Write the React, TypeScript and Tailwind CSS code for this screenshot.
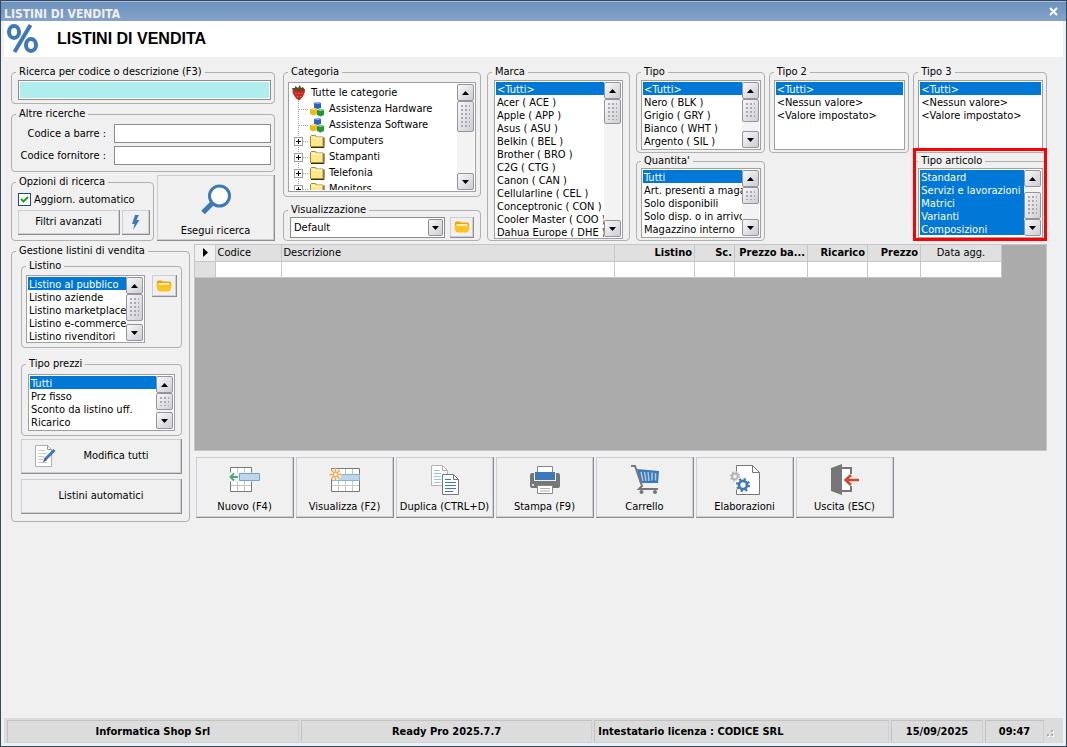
import clsx from "clsx";
import React from "react";

type ListBoxProps = {
  label: string;
  options: string[];
  selected?: string[];
  className: string;
  thumb?: string;
};

const marche = [
  "<Tutti>",
  "Acer ( ACE )",
  "Apple ( APP )",
  "Asus ( ASU )",
  "Belkin ( BEL )",
  "Brother ( BRO )",
  "C2G ( CTG )",
  "Canon ( CAN )",
  "Cellularline ( CEL )",
  "Conceptronic ( CON )",
  "Cooler Master ( COO )",
  "Dahua Europe ( DHE )",
];
const tipi = ["<Tutti>", "Nero ( BLK )", "Grigio ( GRY )", "Bianco ( WHT )", "Argento ( SIL )"];
const valori = ["<Tutti>", "<Nessun valore>", "<Valore impostato>"];
const quantita = [
  "Tutti",
  "Art. presenti a magazzino",
  "Solo disponibili",
  "Solo disp. o in arrivo",
  "Magazzino interno",
];
const articoli = ["Standard", "Servizi e lavorazioni", "Matrici", "Varianti", "Composizioni"];
const listini = [
  "Listino al pubblico",
  "Listino aziende",
  "Listino marketplace",
  "Listino e-commerce",
  "Listino rivenditori",
];
const prezzi = ["Tutti", "Prz fisso", "Sconto da listino uff.", "Ricarico"];

const columns = [
  { name: "Codice", className: "w-[66px] text-left" },
  { name: "Descrizione", className: "text-left" },
  { name: "Listino", className: "w-[80px] text-right font-bold" },
  { name: "Sc.", className: "w-[40px] text-right font-bold" },
  { name: "Prezzo ba...", className: "w-[73px] text-right font-bold" },
  { name: "Ricarico", className: "w-[60px] text-right font-bold" },
  { name: "Prezzo", className: "w-[53px] text-right font-bold" },
  { name: "Data agg.", className: "w-[81px] text-center" },
];

const button =
  "border-r border-b border-[#8e8e92] bg-[#f0f0f0] shadow-[inset_0_0_0_1px_#cdcdd3] active:bg-[#e4e4e4]";

const Group: React.FC<{ title: string; className?: string; body?: string; children: React.ReactNode }> = ({
  title,
  className,
  body,
  children,
}) => (
  <fieldset className={clsx("min-w-0 rounded-[4px] border border-[#b0b0b0]", className)}>
    <legend className="ml-1 px-[3px] leading-[14px] whitespace-nowrap">{title}</legend>
    <div className={body}>{children}</div>
  </fieldset>
);

const Arrow = ({ down }: { down?: boolean }) => (
  <svg width="7" height="4" viewBox="0 0 7 4" className="shrink-0">
    <path d={down ? "M0 0h7L3.5 4z" : "M0 4h7L3.5 0z"} fill="#000" />
  </svg>
);

const scrollPart =
  "flex w-full shrink-0 items-center justify-center rounded-[2px] border border-[#94949a] bg-linear-to-br from-[#f8f8fa] to-[#cdcdd4]";

const ScrollBar = ({ thumb }: { thumb: string }) => (
  <div className="flex w-[17px] shrink-0 flex-col bg-[#f3f3f3]">
    <button type="button" aria-label="Scorri su" className={clsx(scrollPart, "h-[17px]")}>
      <Arrow />
    </button>
    <div className={clsx(scrollPart, thumb)}>
      <div className="h-[calc(100%-6px)] w-[9px] bg-[radial-gradient(circle_at_1px_1px,#a9a9b0_1px,transparent_1px)] bg-size-[4px_4px]" />
    </div>
    <button type="button" aria-label="Scorri giù" className={clsx(scrollPart, "mt-auto h-[17px]")}>
      <Arrow down />
    </button>
  </div>
);

const ListBox: React.FC<ListBoxProps> = ({ label, options, selected, className, thumb }) => (
  <div className={clsx("flex border border-[#a0a0a0] bg-white p-px", className)}>
    <select
      multiple
      aria-label={label}
      size={options.length}
      defaultValue={selected ?? [options[0]]}
      className="block h-full min-w-0 flex-1 appearance-none overflow-hidden border-0 bg-white p-0 outline-none"
    >
      {options.map((option) => (
        <option
          key={option}
          value={option}
          className="h-[13px] min-h-0 overflow-hidden p-0 pt-px pl-px leading-[13px] whitespace-nowrap text-black checked:bg-linear-to-r checked:from-[#0078d7] checked:to-[#0078d7] checked:text-white"
        >
          {option}
        </option>
      ))}
    </select>
    {thumb && <ScrollBar thumb={thumb} />}
  </div>
);

/* Tree icons */
const Strawberry = () => (
  <svg width="16" height="16" viewBox="0 0 16 16" className="shrink-0">
    <path d="M1.500 5C2 3.500 5 3 8 3.500c3-.5 6 0 6 2C14 9 11 13.500 8 15.500 5 14 1 8.500 1.500 5z" fill="#c62a22" />
    <path d="M2 5c2-1 3 1 5 1s4-1 7-1l-2-3-2 1-1-3-2 3-3-2v2L1 3z" fill="#5d4a22" />
    <path d="M5 8v1M8 8v1M11 8v1M6.500 11v1M9.500 11v1" stroke="#f08070" />
  </svg>
);

const Cubes = () => (
  <svg width="16" height="16" viewBox="0 0 16 16" className="shrink-0">
    <path d="M5 2l4-1 3 1v5L8.500 8 5 7z" fill="#2d62c8" />
    <path d="M5 2l4-1 3 1-3.500 1z" fill="#8db4f4" />
    <path d="M1 8l4-1 3 1v5l-3.500 1.500L1 13z" fill="#f2b51a" />
    <path d="M1 8l4-1 3 1-3.500 1z" fill="#ffe480" />
    <path d="M8 9l4-1 3 1v5l-3.500 1.500L8 14z" fill="#1d9a3a" />
    <path d="M8 9l4-1 3 1-3.500 1z" fill="#8ee07a" />
  </svg>
);

const TreeFolder = () => (
  <svg width="16" height="16" viewBox="0 0 16 16" className="shrink-0">
    <path d="M1.500 13.500v-10l1-1h4l1 1.500h6.500v9.500z" fill="#ffe88c" stroke="#a88a20" />
    <path d="M2.500 5h11" stroke="#fffbe0" />
    <path d="M15 4.500V14.500H2" fill="none" stroke="#3c3210" />
  </svg>
);

const Folder = () => (
  <svg width="16" height="12" viewBox="0 0 16 12">
    <path d="M1 2.500C1 1 1.600.5 2.500.5h3L7 1.500h6.500c1 0 1.500.5 1.500 1.500v4H1z" fill="#f5a300" />
    <path d="M2.500 3h11v2h-11z" fill="#fff4c8" />
    <path d="M.5 4c3.500 1.200 11.500 1.200 15 0L15 8.500c-.3 2-1.200 3-3 3H4c-1.800 0-2.700-1-3-3z" fill="#fec31e" />
  </svg>
);

const tree = [
  { name: "Assistenza Hardware", folder: false },
  { name: "Assistenza Software", folder: false },
  { name: "Computers", folder: true },
  { name: "Stampanti", folder: true },
  { name: "Telefonia", folder: true },
  { name: "Monitors", folder: true },
];

const CategoryTree = () => (
  <div className="flex h-[110px] border border-[#a0a0a0] bg-white p-px">
    <ul className="min-w-0 flex-1 overflow-hidden pt-px pl-px" role="tree" aria-label="Categoria">
      <li className="flex h-4 items-center gap-1 whitespace-nowrap" role="treeitem">
        <Strawberry />
        Tutte le categorie
      </li>
      {tree.map(({ name, folder }) => (
        <li key={name} className="flex h-4 items-center whitespace-nowrap" role="treeitem">
          <svg width="18" height="16" viewBox="0 0 18 16" className="shrink-0">
            <path d="M7.500 0v16M8 8.500h10" stroke="#a8a8a8" strokeDasharray="1 1" />
            {folder && (
              <>
                <rect x="3.500" y="4.500" width="8" height="8" fill="#fff" stroke="#a0a0a0" />
                <path d="M5 8.500h5M7.500 6v5" stroke="#000" />
              </>
            )}
          </svg>
          {folder ? <TreeFolder /> : <Cubes />}
          <span className="pl-1">{name}</span>
        </li>
      ))}
    </ul>
    <ScrollBar thumb="h-[31px]" />
  </div>
);

/* Toolbar icons */
const NewIcon = () => (
  <svg width="32" height="32" viewBox="0 0 32 32">
    <path d="M1.500 4.500h21v24h-21zM8.500 4v24M15.500 4v24M1 10.500h21M1 22.500h21" fill="#fff" stroke="#c4c4c4" />
    <path d="M1.500 10V4.500h21V10M1.500 18v10.500h21V18" fill="none" stroke="#777" />
    <path d="M0 9.500h32v9H0z" fill="#f0f0f0" />
    <path d="M10.500 10.500h20v7h-20z" fill="#bfd5ea" stroke="#6fa6cc" />
    <path d="M9 14H2M5 10.500L1.500 14 5 17.500" fill="none" stroke="#4fa882" strokeWidth="2" />
  </svg>
);

const ViewIcon = () => (
  <svg width="32" height="32" viewBox="0 0 32 32">
    <path d="M2.500 5.500h28v23h-28z" fill="#fff" stroke="#777" />
    <path d="M9.500 6v22M16.500 6v22M23.500 6v22M3 22.500h27" stroke="#c8c8c8" />
    <path d="M3 11.500h27.500v6H3z" fill="#bfd5ea" stroke="#7bb7d6" />
    <circle cx="6.500" cy="11.500" r="6" fill="#f0f0f0" />
    <path
      d="M6.500 5.500v12M.5 11.500h12M2.300 7.300l8.400 8.400M10.700 7.300l-8.400 8.400"
      stroke="#efae4e"
      strokeWidth="1.500"
    />
    <circle cx="6.500" cy="11.500" r="2" fill="#fff" stroke="#efae4e" />
  </svg>
);

const CopyIcon = () => (
  <svg width="32" height="32" viewBox="0 0 32 32">
    <path d="M2.500 2.500h11l5 5v15h-16z" fill="#fff" stroke="#b4b4b4" />
    <path d="M13.500 2.500v5h5" fill="none" stroke="#b4b4b4" />
    <path d="M5 7.500h6M5 10.500h7M5 13.500h7M5 16.500h7M5 19.500h7" stroke="#9bc3e2" />
    <path d="M13.500 11.500h11l5 5v15h-16z" fill="#fff" stroke="#777" />
    <path d="M24.500 11.500v5h5" fill="none" stroke="#777" />
    <path d="M16 16.500h6M16 19.500h11M16 22.500h11M16 25.500h11M16 28.500h8" stroke="#3d79b8" />
  </svg>
);

const PrintIcon = () => (
  <svg width="32" height="32" viewBox="0 0 32 32">
    <path d="M3 10h26q2 0 2 2v11q0 2-2 2H3q-2 0-2-2V12q0-2 2-2z" fill="#777" />
    <path d="M5 8h22v10H5z" fill="#f0f0f0" />
    <path d="M8.500 3.500h15V10h-15z" fill="#fff" stroke="#888" />
    <path d="M6 9h20v8H6z" fill="#3d79b8" />
    <path d="M8.500 22.500h15v8h-15z" fill="#fff" stroke="#888" />
    <path d="M11 25.500h10M11 28h10" stroke="#b0b0b0" />
    <circle cx="4" cy="22" r="1" fill="#fff" />
  </svg>
);

const CartIcon = () => (
  <svg width="32" height="32" viewBox="0 0 32 32">
    <path d="M8 6l22 2-1 12H11z" fill="#3d79b8" />
    <path d="M12 9l2 9M15.500 9l1.500 9M19 9l1 9M23 9.500v8M26.500 10v7.500" stroke="#a9cbe8" strokeWidth="1.500" />
    <path d="M2 3h4l7 20-3 3h19" fill="none" stroke="#777" strokeWidth="2" />
    <circle cx="12.500" cy="29" r="2" fill="#777" />
    <circle cx="26" cy="29" r="2" fill="#777" />
  </svg>
);

const Gear = ({ x, y, size, color }: { x: number; y: number; size: number; color: string }) => (
  <g transform={`translate(${x} ${y})`} fill="none" stroke={color}>
    <circle r={size * 0.58} strokeWidth={size * 0.4} />
    <circle r={size * 0.88} strokeWidth={size * 0.28} strokeDasharray={`${size * 0.32} ${size * 0.371}`} />
  </g>
);

const ProcessIcon = () => (
  <svg width="32" height="32" viewBox="0 0 32 32">
    <path d="M7.500 2.500h16l7 7v22h-23z" fill="#fff" stroke="#777" />
    <path d="M23.500 2.500v7h7" fill="none" stroke="#777" />
    <circle cx="6" cy="13.500" r="5.500" fill="#f0f0f0" />
    <Gear x={6} y={13.5} size={5} color="#b4b4b4" />
    <circle cx="14" cy="22" r="8" fill="#fff" />
    <Gear x={14} y={22} size={7} color="#3d79b8" />
  </svg>
);

const ExitIcon = () => (
  <svg width="32" height="32" viewBox="0 0 32 32">
    <path d="M12 5h10v23H12" fill="#fff" stroke="#777" strokeWidth="2" />
    <path d="M2 5l11-4v31L2 28z" fill="#777" />
    <path d="M19 11h6v12h-6z" fill="#f0f0f0" />
    <path d="M30 17H17M22 12l-5.500 5L22 22" fill="none" stroke="#d1492f" strokeWidth="2.500" />
  </svg>
);

const tools = [
  { name: "Nuovo (F4)", Icon: NewIcon },
  { name: "Visualizza (F2)", Icon: ViewIcon },
  { name: "Duplica (CTRL+D)", Icon: CopyIcon },
  { name: "Stampa (F9)", Icon: PrintIcon },
  { name: "Carrello", Icon: CartIcon },
  { name: "Elaborazioni", Icon: ProcessIcon },
  { name: "Uscita (ESC)", Icon: ExitIcon },
];

const SearchPanel = () => (
  <div className="flex min-w-0 flex-col gap-[3px]">
    <Group title="Ricerca per codice o descrizione (F3)" className="h-[39px]" body="pt-px pr-[3px] pl-1.5">
      <input
        aria-label="Ricerca per codice o descrizione (F3)"
        className="block h-5 w-full border border-[#8c8c8c] bg-[#b0eeee] px-1 shadow-[inset_0_0_0_1px_#fff] outline-none"
      />
    </Group>
    <Group
      title="Altre ricerche"
      body="grid grid-cols-[98px_1fr] items-center gap-x-1 gap-y-[3px] pt-[3px] pr-[3px] pb-1.5"
    >
      <label htmlFor="barre" className="pr-1 text-right">
        Codice a barre :
      </label>
      <input id="barre" className="h-[19px] min-w-0 border border-[#8c8c8c] bg-white px-1 outline-none" />
      <label htmlFor="fornitore" className="pr-1 text-right">
        Codice fornitore :
      </label>
      <input id="fornitore" className="h-[19px] min-w-0 border border-[#8c8c8c] bg-white px-1 outline-none" />
    </Group>
    <div className="flex flex-1 gap-[3px]">
      <Group title="Opzioni di ricerca" className="w-[143px]" body="pt-1 pr-[3px] pl-1.5">
        <label className="relative flex h-[13px] items-center gap-[3px] whitespace-nowrap">
          <input
            type="checkbox"
            defaultChecked
            className="peer h-[13px] w-[13px] shrink-0 appearance-none border border-[#1c4f80] bg-white"
          />
          <svg
            viewBox="0 0 13 13"
            className="pointer-events-none absolute top-0 left-0 hidden h-[13px] w-[13px] peer-checked:block"
          >
            <path d="M3 6l2.500 2.500L10 4" fill="none" stroke="#21a121" strokeWidth="2" />
          </svg>
          Aggiorn. automatico
        </label>
        <div className="flex gap-0.5 pt-1">
          <button type="button" className={clsx(button, "h-[25px] flex-1")}>
            Filtri avanzati
          </button>
          <button
            type="button"
            aria-label="Filtro rapido"
            className={clsx(button, "flex h-[25px] w-7 items-center justify-center")}
          >
            <svg width="9" height="15" viewBox="0 0 9 15">
              <path d="M4 0h4L5.500 5H8.500L2 15l1.500-6H1z" fill="#3d79b8" />
            </svg>
          </button>
        </div>
      </Group>
      <button type="button" className={clsx(button, "flex flex-1 flex-col items-center justify-end gap-2 pb-0.5")}>
        <svg width="32" height="32" viewBox="0 0 32 32">
          <circle cx="19.500" cy="12" r="10" fill="#fff" stroke="#3d79b8" strokeWidth="3" />
          <path d="M12 19.500L3 28.500" stroke="#3d79b8" strokeWidth="5" />
        </svg>
        Esegui ricerca
      </button>
    </div>
  </div>
);

const Filters = () => (
  <div className="grid grid-cols-[264fr_764fr] gap-2">
    <SearchPanel />
    <div className="grid min-w-0 grid-cols-[198fr_143fr_411fr] gap-1.5">
      <div className="flex min-w-0 flex-col gap-1.5">
        <Group title="Categoria" body="px-1 pt-[3px] pb-1">
          <CategoryTree />
        </Group>
        <Group title="Visualizzazione" className="flex-1" body="flex items-center gap-[5px] px-1.5">
          <div className="relative min-w-0 flex-1">
            <select
              aria-label="Visualizzazione"
              className="block h-[21px] w-full appearance-none border border-[#8c8c8c] bg-white px-[3px] outline-none"
            >
              <option>Default</option>
            </select>
            <span className="pointer-events-none absolute inset-y-0.5 right-0.5 flex w-[15px] items-center justify-center rounded-[2px] border border-[#8c8c92] bg-linear-to-br from-[#f8f8fa] to-[#cdcdd4]">
              <Arrow down />
            </span>
          </div>
          <button
            type="button"
            aria-label="Apri visualizzazioni"
            className={clsx(button, "flex h-[21px] w-6 items-center justify-center")}
          >
            <Folder />
          </button>
        </Group>
      </div>

      <Group title="Marca" body="px-1.5 pt-px">
        <ListBox label="Marca" options={marche} className="h-[159px]" thumb="h-[25px]" />
      </Group>

      <div className="grid min-w-0 grid-cols-[129fr_141fr_134fr] items-start gap-1">
        <div className="flex min-w-0 flex-col gap-px">
          <Group title="Tipo" body="pt-px pr-[3px] pb-0.5 pl-1">
            <ListBox label="Tipo" options={tipi} className="h-[70px]" thumb="h-[23px]" />
          </Group>
          <Group title="Quantita'" body="pr-[3px] pb-0.5 pl-1">
            <ListBox label="Quantita'" options={quantita} className="h-[70px]" thumb="h-[17px]" />
          </Group>
        </div>
        <Group title="Tipo 2" body="pt-px pr-[3px] pb-0.5 pl-1">
          <ListBox label="Tipo 2" options={valori} className="h-[70px]" />
        </Group>
        <div className="flex min-w-0 flex-col gap-px">
          <Group title="Tipo 3" body="pt-px pr-[3px] pb-0.5 pl-1">
            <ListBox label="Tipo 3" options={valori} className="h-[70px]" />
          </Group>
          <div className="relative">
            <Group title="Tipo articolo" body="pr-[3px] pb-0.5 pl-1">
              <ListBox
                label="Tipo articolo"
                options={articoli}
                selected={articoli}
                className="h-[70px]"
                thumb="mt-[5px] h-[27px]"
              />
            </Group>
            <div className="pointer-events-none absolute inset-x-0 -top-1.5 bottom-0 border-3 border-[#ff0000]" />
          </div>
        </div>
      </div>
    </div>
  </div>
);

const PriceLists = () => (
  <Group
    title="Gestione listini di vendita"
    className="w-[179px] shrink-0"
    body="flex flex-col pt-px pr-[7px] pb-[7px] pl-[9px]"
  >
    <Group title="Listino" body="flex items-start gap-[7px] px-1 pt-0.5 pb-1">
      <ListBox label="Listino" options={listini} className="h-[68px] w-[120px]" thumb="h-[27px]" />
      <button
        type="button"
        aria-label="Apri listini"
        className={clsx(button, "flex h-[22px] w-[26px] items-center justify-center")}
      >
        <Folder />
      </button>
    </Group>
    <Group title="Tipo prezzi" className="mt-[9px]" body="px-1.5 pt-[3px] pb-1">
      <ListBox label="Tipo prezzi" options={prezzi} className="h-[57px]" thumb="h-[17px]" />
    </Group>
    <button type="button" className={clsx(button, "mt-[3px] flex h-[35px] items-center pr-1.5 pl-3")}>
      <svg width="24" height="24" viewBox="0 0 24 24">
        <path d="M2.500 1.500h12l4 4v17h-16z" fill="#fff" stroke="#b0b0b0" />
        <path d="M14.500 1.500v4h4" fill="none" stroke="#999" />
        <path d="M5 6.500h7M5 9.500h9M5 12.500h6M5 15.500h5M5 18.500h9" stroke="#ccc" />
        <path d="M21.500 6l-10 10" stroke="#3d79b8" strokeWidth="3" />
        <path d="M12 14.500L9.500 18.500l4-2z" fill="#555" />
      </svg>
      <span className="flex-1">Modifica tutti</span>
    </button>
    <button type="button" className={clsx(button, "mt-[5px] h-[35px]")}>
      Listini automatici
    </button>
  </Group>
);

const Results = () => (
  <div className="h-[207px] border border-[#c6c6ca] bg-[#ababab] pr-11">
    <table className="w-full table-fixed border-collapse">
      <thead>
        <tr className="h-4 bg-[#e0e0e0]">
          <th className="w-5 border-r border-b border-[#c6c6ca] bg-[#f0f0f0] p-0" aria-label="Riga corrente">
            <svg width="5" height="9" viewBox="0 0 5 9" className="ml-2">
              <path d="M0 0v9l5-4.500z" fill="#000" />
            </svg>
          </th>
          {columns.map(({ name, className }) => (
            <th
              key={name}
              className={clsx(
                "border-r border-b border-[#c6c6ca] px-0.5 py-0 leading-[15px] whitespace-nowrap",
                className,
                !className.includes("font-bold") && "font-normal",
              )}
            >
              {name}
            </th>
          ))}
        </tr>
      </thead>
      <tbody>
        <tr className="h-4 bg-white">
          <td className="border-r border-b border-[#c6c6ca] bg-[#e0e0e0] p-0" />
          {columns.map(({ name }) => (
            <td key={name} className="border-r border-b border-[#c6c6ca] p-0" />
          ))}
        </tr>
      </tbody>
    </table>
  </div>
);

const statusCell =
  "flex h-[23px] min-w-0 items-center justify-center border border-[#c2c2c4] border-r-[#cfcfd8] border-b-[#cfcfd8] whitespace-nowrap";

const StatusBar = () => (
  <footer className="mx-[3px] mb-[3px] flex gap-0.5 bg-[#dcdcdc] px-[3px] pt-0.5 font-bold">
    <div className={clsx(statusCell, "flex-1")}>Informatica Shop Srl</div>
    <div className={clsx(statusCell, "flex-1")}>Ready Pro 2025.7.7</div>
    <div className={clsx(statusCell, "flex-1 justify-start pl-[3px]")}>Intestatario licenza : CODICE SRL</div>
    <div className={clsx(statusCell, "w-[92px]")}>15/09/2025</div>
    <div className={clsx(statusCell, "w-[59px]")}>09:47</div>
    <svg width="14" height="23" viewBox="0 0 14 23">
      <path d="M2 15h2v2H2zM6 15h2v2H6zM6 11h2v2H6z" fill="#fff" />
      <path d="M1 14h2v2H1zM5 14h2v2H5zM5 10h2v2H5z" fill="#b0b0b0" />
    </svg>
  </footer>
);

const App: React.FC = () => (
  <div className="flex min-h-screen flex-col border border-[#34495f] bg-[#f0f0f0] font-['DejaVu_Sans_Condensed','DejaVu_Sans',sans-serif] text-[11px] leading-[14px] text-black">
    <header>
      <div className="flex h-5 items-center justify-between border-t border-[#a9bfda] bg-linear-to-b from-[#6d92bd] to-[#84a3c8] pt-1 pr-2 pl-[3px] text-[#f0f0f0]">
        <span className="text-xs font-bold">LISTINI DI VENDITA</span>
        <button type="button" aria-label="Chiudi" className="pb-1">
          <svg width="9" height="9" viewBox="0 0 9 9">
            <path d="M1 1l7 7M8 1L1 8" stroke="#fff" strokeWidth="2" />
          </svg>
        </button>
      </div>
      <div className="mx-[3px] flex h-9 items-center gap-[19px] bg-white pl-[3px]">
        <svg width="31" height="30" viewBox="0 0 31 30">
          <g fill="none" stroke="#3d79b8" strokeWidth="4">
            <ellipse cx="7" cy="8" rx="5" ry="6" />
            <ellipse cx="24" cy="21" rx="5" ry="6" />
            <path d="M23.500 1L7.500 28" />
          </g>
        </svg>
        <h1 className="font-['Liberation_Sans',Arial,sans-serif] text-base font-bold">LISTINI DI VENDITA</h1>
      </div>
    </header>

    <main className="flex flex-1 flex-col gap-[3px] pt-2 pr-[19px] pb-4 pl-2.5">
      <Filters />
      <div className="flex items-start gap-1">
        <PriceLists />
        <div className="min-w-0 flex-1">
          <Results />
          <div className="flex gap-0.5 pt-1.5 pl-0.5">
            {tools.map(({ name, Icon }) => (
              <button
                key={name}
                type="button"
                className={clsx(
                  button,
                  "flex h-[61px] w-[98px] flex-col items-center justify-end gap-[5px] pb-[3px] whitespace-nowrap",
                )}
              >
                <Icon />
                {name}
              </button>
            ))}
          </div>
        </div>
      </div>
    </main>

    <StatusBar />
  </div>
);

export default App;
